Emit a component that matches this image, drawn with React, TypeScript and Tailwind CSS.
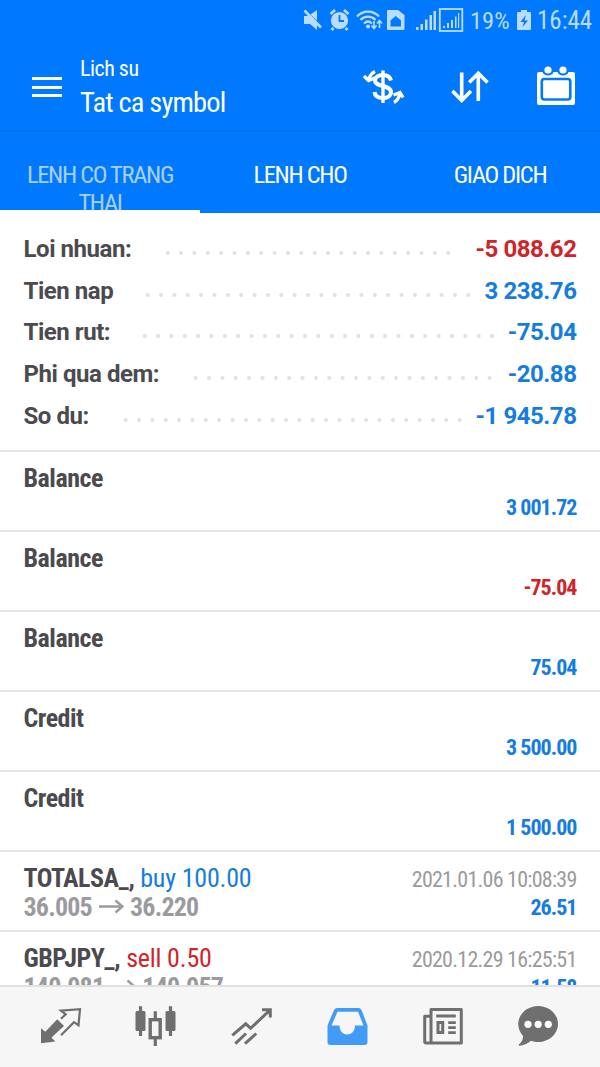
import type { ReactNode } from 'react';

interface SummaryRow {
  label: string;
  value: string;
  color: string;
  labelWidth: number;
  dots: number;
}

interface HistoryItem {
  title: string;
  amount: string;
  amountColor: string;
  side?: string;
  sideColor?: string;
  from?: string;
  to?: string;
  date?: string;
}

const DOT_STEP = 13.36;

const summary: SummaryRow[] = [
  { label: 'Loi nhuan:', value: '-5 088.62', color: 'text-[#cf2429]', labelWidth: 137.5, dots: 22 },
  { label: 'Tien nap', value: '3 238.76', color: 'text-[#157ce0]', labelWidth: 117.5, dots: 25 },
  { label: 'Tien rut:', value: '-75.04', color: 'text-[#157ce0]', labelWidth: 114.8, dots: 27 },
  { label: 'Phi qua dem:', value: '-20.88', color: 'text-[#157ce0]', labelWidth: 165.1, dots: 23 },
  { label: 'So du:', value: '-1 945.78', color: 'text-[#157ce0]', labelWidth: 95.1, dots: 26 },
];

const history: HistoryItem[] = [
  { title: 'Balance', amount: '3 001.72', amountColor: 'text-[#157ce0]' },
  { title: 'Balance', amount: '-75.04', amountColor: 'text-[#cf2429]' },
  { title: 'Balance', amount: '75.04', amountColor: 'text-[#157ce0]' },
  { title: 'Credit', amount: '3 500.00', amountColor: 'text-[#157ce0]' },
  { title: 'Credit', amount: '1 500.00', amountColor: 'text-[#157ce0]' },
  {
    title: 'TOTALSA_,',
    amount: '26.51',
    amountColor: 'text-[#157ce0]',
    side: 'buy 100.00',
    sideColor: 'text-[#157ce0]',
    from: '36.005',
    to: '36.220',
    date: '2021.01.06 10:08:39',
  },
  {
    title: 'GBPJPY_,',
    amount: '11.58',
    amountColor: 'text-[#157ce0]',
    side: 'sell 0.50',
    sideColor: 'text-[#cf2429]',
    from: '140.081',
    to: '140.057',
    date: '2020.12.29 16:25:51',
  },
];

function Icon({ children, className = '' }: { children: ReactNode; className?: string }) {
  return (
    <svg viewBox="0 0 48 48" className={`h-12 w-12 shrink-0 ${className}`} fill="none" stroke="currentColor">
      {children}
    </svg>
  );
}

function StatusBar() {
  return (
    <div className="flex h-10 shrink-0 items-center justify-end pr-[9px] text-[#b9dcff]">
      {/* Mute, alarm, wifi, sim, signal bars */}
      <svg viewBox="0 0 162 24" className="h-6 w-[162px]" fill="currentColor">
        <path d="M2 8h5l1.500 1.500L15 16v6l-7-6H2zM8.500 6.500L15 2v10.500z" />
        <path d="M2.500 2.500L19 19.500" stroke="currentColor" strokeWidth="2.600" />
        <circle cx="37.500" cy="12.500" r="8.600" />
        <path d="M28.500 6l4.500-4M46.500 6l-4.500-4M31.500 20l-2 2M43.500 20l2 2" stroke="currentColor" strokeWidth="2.800" />
        <path d="M37.500 7v6h4.500" fill="none" stroke="#0079ff" strokeWidth="1.800" />
        <g fill="none" stroke="currentColor" strokeWidth="2.200">
          <path d="M55 8.500c6-6.500 16-6.500 22 0M58.500 12c4-4.500 11-4.500 15 0M62 15.500c2.500-2.500 5.500-2.500 8 0" />
          <path d="M72 13v7M69.500 17.500L72 20.500l2.500-3M77.500 20v-7M75 15.500l2.500-3 2.500 3" strokeWidth="1.600" />
        </g>
        <circle cx="66" cy="18.500" r="2" />
        <path d="M86 2h10l6.500 5v14a1 1 0 0 1-1 1H86a1 1 0 0 1-1-1V3a1 1 0 0 1 1-1z" />
        <path d="M88.500 18.500v-6l5.200-4.500 5.300 4.500v6z" fill="#0079ff" />
        <path d="M114 22v-3h2.500v3zM118.500 22v-6h2.500v6zM123 22V11.500h2.500V22zM127.500 22V7h2.500v15zM131.500 22V3h2.500v19z" />
        <rect x="137.800" y="1" width="22.500" height="22" fill="none" stroke="currentColor" strokeWidth="1.800" />
        <path d="M141 20v-2h2v2zM145 20v-5h2v5zM149 20v-8h2v8zM153 20V8.500h1.500V20zM156 20V5h1.200v15z" />
      </svg>
      <span className="ml-[6px] mt-[2px] w-[41px] whitespace-nowrap text-[24.500px]">19%</span>
      <svg viewBox="0 0 14 22" className="ml-[6px] h-[22px] w-[14px]" fill="currentColor">
        <path d="M4 1h6v2h3a1 1 0 0 1 1 1v16a1 1 0 0 1-1 1H1a1 1 0 0 1-1-1V4a1 1 0 0 1 1-1h3z" />
        <path d="M9 6l-5.500 7H7l-1.500 5L11 11.500H7.500z" fill="#0079ff" />
      </svg>
      <span className="ml-[6px] mt-[2px] w-[54px] whitespace-nowrap text-[25px]">16:44</span>
    </div>
  );
}

function Header() {
  return (
    <header className="flex h-[92px] shrink-0 items-center border-b-2 border-[#0072ef] pl-[32px] pr-5 pt-[4px] text-white">
      <div className="flex w-[30px] flex-col gap-[5.500px]">
        <span className="h-[3px] bg-white" />
        <span className="h-[3px] bg-white" />
        <span className="h-[3px] bg-white" />
      </div>
      <div className="ml-[18px] flex-1">
        <div className="mt-[-3px] text-[22px] leading-[34px] tracking-[-0.5px]">Lich su</div>
        <div className="text-[28.500px] leading-[34px] tracking-[-0.85px]">Tat ca symbol</div>
      </div>
      <div className="flex gap-[38px]">
        <Icon>
          <path d="M31 17.500c-1-4-4-5.500-8-5.500-4.500 0-8 1.800-8 5.500 0 7 16 4 16 11.500 0 4-4 6-8 6-5 0-8-2-8.500-6" strokeWidth="4" />
          <path d="M23 7.500V40" strokeWidth="3.400" />
          <path d="M15 8.500c-3.500 1.500-5 4-6.500 8M4 13l4.500 4.500 6-2.500" strokeWidth="3.300" />
          <path d="M34 39.500c3.500-2 5-5 6-9M33.500 32l6.500-2.500 3 5" strokeWidth="3.300" />
        </Icon>
        <Icon>
          <path d="M15.700 9.500V37M6.500 28l9.200 9.500 9.300-9.500M32.300 38V11M23.200 19.500l9.100-9.300 9.200 9.300" strokeWidth="3.600" />
        </Icon>
        <Icon>
          <path
            d="M7 9h3.500c1 4.500 10 4.500 11 0h4c1 4.500 10 4.500 11 0H41a2 2 0 0 1 2 2v29a2 2 0 0 1-2 2H7a2 2 0 0 1-2-2V11a2 2 0 0 1 2-2z"
            fill="currentColor"
            stroke="none"
          />
          <rect x="9.800" y="16" width="28.500" height="20.500" rx="2.500" stroke="#0079ff" strokeWidth="2.600" />
          <circle cx="16" cy="7" r="3.600" fill="currentColor" stroke="none" />
          <circle cx="31" cy="7" r="3.600" fill="currentColor" stroke="none" />
        </Icon>
      </div>
    </header>
  );
}

function Tabs() {
  return (
    <nav className="grid h-[81px] shrink-0 grid-cols-3 text-center text-[24.500px] leading-[28px] tracking-[-1.3px] text-white">
      <div className="overflow-hidden border-b-[3px] border-white px-5 pt-[29px] text-[#a9d1ff]">LENH CO TRANG THAI</div>
      <div className="pt-[29px]">LENH CHO</div>
      <div className="pt-[29px]">GIAO DICH</div>
    </nav>
  );
}

function Summary() {
  return (
    <section className="h-[237px] shrink-0 px-[23.500px] pt-[15px] font-['Roboto'] text-[24px] font-bold tracking-[-0.45px]">
      {summary.map((row) => (
        <div key={row.label} className="flex h-[41.700px] items-center">
          <span className="shrink-0 whitespace-nowrap text-[#4b4b4f]" style={{ width: row.labelWidth }}>
            {row.label}
          </span>
          <span
            className="mt-2 h-[6px] bg-[radial-gradient(circle,#e2e2e2_1.600px,transparent_2.400px)] bg-[length:13.360px_6px]"
            style={{ width: row.dots * DOT_STEP }}
          />
          <span className={`ml-auto whitespace-nowrap ${row.color}`}>{row.value}</span>
        </div>
      ))}
    </section>
  );
}

function HistoryRow({ item }: { item: HistoryItem }) {
  return (
    <div className="flex h-20 shrink-0 justify-between border-t-2 border-[#e5e5e5] px-[23.500px] pt-[11px]">
      <div className="whitespace-nowrap text-[26px] leading-[30px]">
        <div>
          <span className="font-bold tracking-[-0.5px] text-[#4b4b4f]">{item.title}</span>
          {item.side && <span className={`ml-[6px] tracking-[-0.2px] ${item.sideColor}`}>{item.side}</span>}
        </div>
        {item.from && (
          <div className="mt-[-1px] flex items-center font-bold tracking-[-0.8px] text-[#9b9b9f]">
            {item.from}
            <svg viewBox="0 0 26 16" className="mx-[6px] h-4 w-[26px] shrink-0" fill="none" stroke="currentColor" strokeWidth="2.400">
              <path d="M1 7.500h23M17.500 1.500L24.500 7.500l-7 6" />
            </svg>
            {item.to}
          </div>
        )}
      </div>
      <div className="flex flex-col whitespace-nowrap text-right text-[22px] leading-[28px]">
        <div className="h-[31px] pt-[3px] tracking-[-0.75px] text-[#9b9b9b]">{item.date}</div>
        <div className={`font-bold tracking-[-0.95px] ${item.amountColor}`}>{item.amount}</div>
      </div>
    </div>
  );
}

function BottomNav() {
  return (
    <nav className="flex h-[82px] shrink-0 items-center justify-around border-t-2 border-[#e0e0e0] bg-[#f6f6f6] px-[13px] text-[#6f6f6f]">
      <Icon>
        <path d="M4 40.300V25.300l4.300 3.400 12-12.400L27 23 14.500 34.500l3.800 4z" fill="currentColor" stroke="none" />
        <path d="M24 15.700l4.700-4.400L24 7.700l19-1.500-1.500 16-4.500-3-13 13" strokeWidth="2.200" />
      </Icon>
      <Icon>
        <rect x="3.500" y="8" width="10" height="20" rx="1.500" fill="currentColor" stroke="none" />
        <rect x="33.500" y="8" width="10" height="20" rx="1.500" fill="currentColor" stroke="none" />
        <path d="M8.500 3.300v29.700M38.500 3.300v29.700M23.300 8.300V16M23.300 36v7" strokeWidth="3.200" />
        <rect x="18.200" y="16.700" width="10" height="18" strokeWidth="3.400" />
      </Icon>
      <Icon>
        <path d="M4.300 32.300l13.400-11.500 5 4.500L41 8M34 6.700h8.300V14.500M7.300 40.700L18 30.500M17 40.700l11.300-10.200" strokeWidth="3" />
      </Icon>
      <Icon className="text-[#429bf7]">
        <path
          fillRule="evenodd"
          d="M13 5h21.500q2 0 3 2l6 15.500v16.500a3 3 0 0 1-3 3h-34a3 3 0 0 1-3-3V22.500L10 7q1-2 3-2zM13.500 8.700L7.500 22.500H15.500c0 12 15.500 12 15.500 0h8.500L34 8.700z"
          fill="currentColor"
          stroke="none"
        />
      </Icon>
      <Icon>
        <path d="M12 6.500h30.300v33.500H12zM12 13.200H5.700v25.300q0 1.500 1.500 1.500H12" strokeWidth="3" strokeLinejoin="round" />
        <path d="M17.200 13h19.600M29.200 19.700h7.600M29.200 24.700h7.600M29.200 29.700h7.600" strokeWidth="2.800" />
        <rect x="19" y="19.500" width="4.700" height="10" strokeWidth="3" />
      </Icon>
      <Icon>
        <path
          d="M23.200 3C34 3 43 11 43 21s-9 18-19.800 18c-2.700 0-5-.4-7.200-1.200-3.500 3-7.500 4.900-11.500 4.900-.8 0-1-.8-.4-1.400C7 38.700 8 36.500 8 33 5 29.500 3.300 25.500 3.300 21 3.300 11 12.400 3 23.200 3z"
          fill="currentColor"
          stroke="none"
        />
        <g fill="#ffffff" stroke="none">
          <circle cx="13" cy="21.300" r="3.600" />
          <circle cx="23.200" cy="21.300" r="3.600" />
          <circle cx="33.300" cy="21.300" r="3.600" />
        </g>
      </Icon>
    </nav>
  );
}

export default function App() {
  return (
    <div className="flex h-[1067px] w-[600px] flex-col overflow-hidden bg-white font-['Roboto_Condensed','Roboto',sans-serif]">
      <div className="shrink-0 bg-[#0079ff]">
        <StatusBar />
        <Header />
        <Tabs />
      </div>
      <Summary />
      <div className="flex min-h-0 flex-1 flex-col overflow-hidden">
        {history.map((item, i) => (
          <HistoryRow key={i} item={item} />
        ))}
      </div>
      <BottomNav />
    </div>
  );
}
